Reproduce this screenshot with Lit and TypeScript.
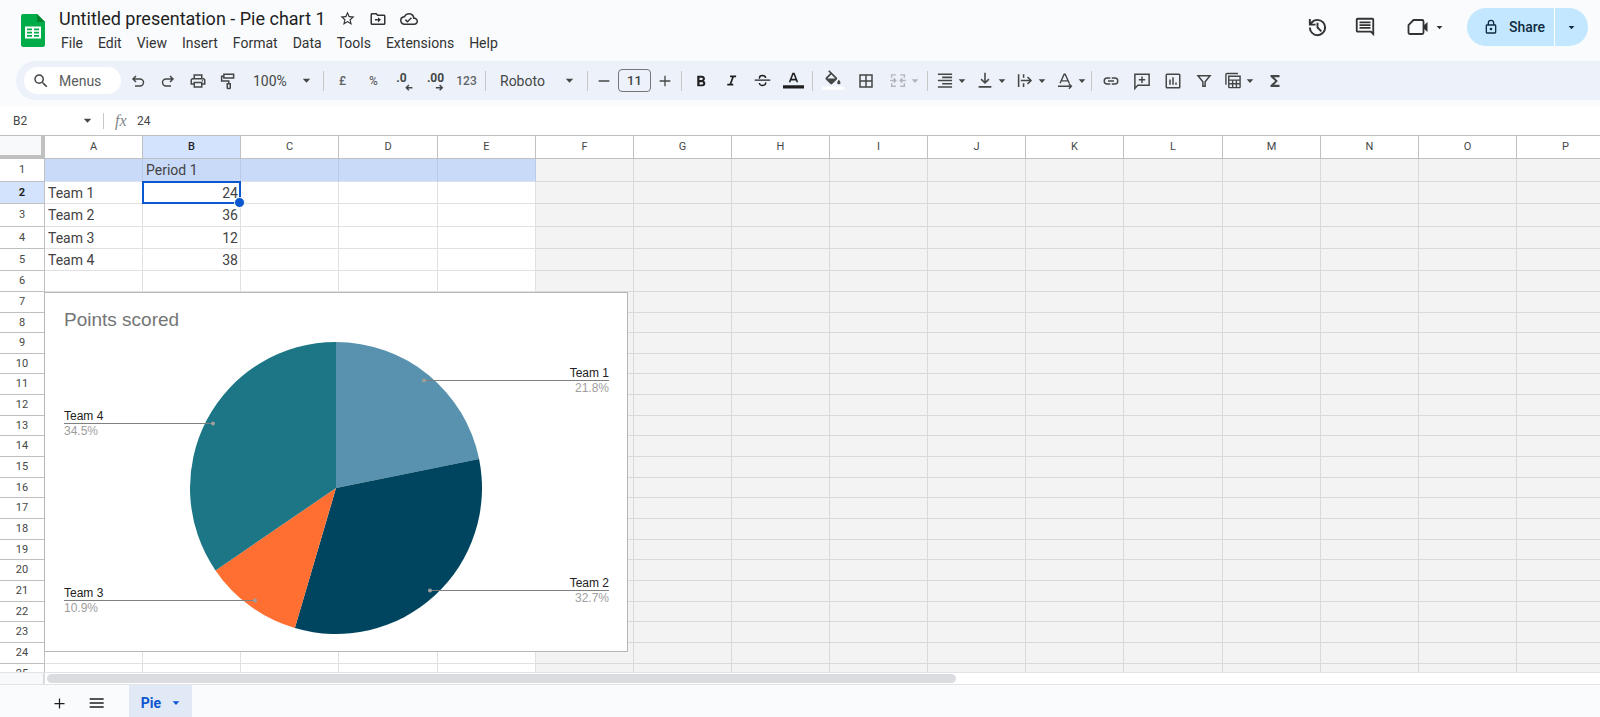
import { LitElement, html, css, svg, nothing } from "lit";
import { customElement, property } from "lit/decorators.js";
import { classMap } from "lit/directives/class-map.js";

const GLYPHS: Record<string, unknown> = {
  star: svg`<path d="m22 9.24-7.19-.62L12 2 9.19 8.63 2 9.24l5.46 4.73L5.82 21 12 17.27 18.18 21l-1.63-7.03zM12 15.4l-3.76 2.27 1-4.28-3.32-2.88 4.38-.38L12 6.1l1.71 4.04 4.38.38-3.32 2.88 1 4.28z"/>`,
  move: svg`<path d="M20 6h-8l-2-2H4c-1.1 0-2 .9-2 2v12c0 1.100.9 2 2 2h16c1.100 0 2-.9 2-2V8c0-1.100-.9-2-2-2m0 12H4V6h5.170l2 2H20zm-8-4v2.500l4-3.500-4-3.500V12H8v2z"/>`,
  cloud: svg`<path d="M19.35 10.04A7.49 7.49 0 0 0 12 4C9.110 4 6.600 5.640 5.350 8.040A5.994 5.994 0 0 0 0 14c0 3.310 2.690 6 6 6h13c2.760 0 5-2.240 5-5 0-2.640-2.050-4.780-4.650-4.960M19 18H6c-2.210 0-4-1.790-4-4s1.790-4 4-4h.710C7.370 7.690 9.480 6 12 6c3.040 0 5.500 2.460 5.500 5.500v.500H19c1.660 0 3 1.340 3 3s-1.340 3-3 3m-9-3.820-2.090-2.090L6.500 13.500 10 17l6.010-6.010-1.410-1.410z"/>`,
  history: svg`<path d="M12 3a9 9 0 0 0-7 3.360V3H3v7h7V8H6.260A7 7 0 1 1 5 12H3a9 9 0 1 0 9-9m-1 4v5.400l4.300 4.300 1.400-1.400-3.700-3.700V7z"/>`,
  comment: svg`<path d="M20 2H4c-1.100 0-2 .9-2 2v12c0 1.100.9 2 2 2h14l4 4V4c0-1.100-.9-2-2-2m0 15.200-1.200-1.200H4V4h16zM6 12h12v2H6zm0-3h12v2H6zm0-3h12v2H6z"/>`,
  video: svg`<path d="M7.500 5H16a1.500 1.500 0 0 1 1.500 1.500v11A1.500 1.500 0 0 1 16 19H4a1.500 1.500 0 0 1-1.500-1.500V10z" fill="none" stroke="currentColor" stroke-width="1.800"/><path d="m17 11 4.500-4v10L17 13z"/>`,
  lock: svg`<path d="M18 8h-1V6A5 5 0 0 0 7 6v2H6a2 2 0 0 0-2 2v10a2 2 0 0 0 2 2h12a2 2 0 0 0 2-2V10a2 2 0 0 0-2-2M9 6a3 3 0 0 1 6 0v2H9zm9 14H6V10h12zm-6-3a2 2 0 1 0 0-4 2 2 0 0 0 0 4"/>`,
  search: svg`<path d="M15.500 14h-.790l-.280-.270A6.471 6.471 0 0 0 16 9.500 6.500 6.500 0 1 0 9.500 16c1.610 0 3.090-.590 4.230-1.570l.270.280v.790l5 4.990L20.490 19zm-6 0C7.010 14 5 11.990 5 9.500S7.010 5 9.500 5 14 7.010 14 9.500 11.990 14 9.500 14"/>`,
  undo: svg`<path d="M9 4.500 4.500 9 9 13.500M5 9h10a5 5 0 0 1 0 10.500H7.500" fill="none" stroke="currentColor" stroke-width="2.200"/>`,
  redo: svg`<path d="M15 4.500 19.500 9 15 13.500M19 9H9a5 5 0 0 0 0 10.500h7.500" fill="none" stroke="currentColor" stroke-width="2.200"/>`,
  print: svg`<path d="M19 8h-1V3H6v5H5c-1.660 0-3 1.340-3 3v6h4v4h12v-4h4v-6c0-1.660-1.340-3-3-3M8 5h8v3H8zm8 14H8v-4h8zm2-4v-2H6v2H4v-4c0-.550.450-1 1-1h14c.550 0 1 .450 1 1v4z"/><circle cx="18" cy="11.500" r="1"/>`,
  paint: svg`<path d="M6.500 3h13v5h-13zM6.500 5.500H3.500v6.500H13v3M11 15.500h4V21a1 1 0 0 1-1 1h-2a1 1 0 0 1-1-1z" fill="none" stroke="currentColor" stroke-width="2"/>`,
  bold: svg`<path d="M15.600 11.790c.970-.670 1.650-1.770 1.650-2.790 0-2.260-1.750-4-4-4H7v14h7.040c2.090 0 3.710-1.700 3.710-3.790 0-1.520-.860-2.820-2.150-3.420M10 7.500h3a1.500 1.500 0 0 1 0 3h-3zm3.500 9H10v-3h3.500a1.500 1.500 0 0 1 0 3"/>`,
  italic: svg`<path d="M10 5v2.300h2.800L9.400 16.700H6V19h8.500v-2.300h-2.600l3.400-9.400H18.500V5z"/>`,
  strike: svg`<path d="M1 11.500h22M16.500 8.500C16.200 6.300 14.500 5 12 5 9.500 5 7.700 6.300 7.700 8.300c0 .5.1.9.3 1.200M7.500 15.500c.3 2.200 2 3.500 4.500 3.500s4.500-1.300 4.500-3.300c0-.5-.1-.9-.3-1.200" fill="none" stroke="currentColor" stroke-width="2"/>`,
  textColor: svg`<path d="M7.500 14 11.400 4h1.200l3.900 10M9 11h6" fill="none" stroke="currentColor" stroke-width="1.800"/><path d="M0 17.500h24v3.600H0z"/>`,
  fill: svg`<path d="M16.560 7.940 7.620-1 6.200.410l2.380 2.380-5.150 5.150a1.490 1.490 0 0 0 0 2.120l5.500 5.500c.290.290.680.440 1.060.440s.770-.150 1.060-.440l5.500-5.500c.590-.580.590-1.530.010-2.120M5.200 9 10 4.200 14.800 9zM19 10.500s-2 2.170-2 3.500a2 2 0 0 0 4 0c0-1.330-2-3.500-2-3.500"/><path d="M-1 18.500h26v4H-1z" fill="#fff"/>`,
  borders: svg`<path d="M3 3v18h18V3zm8 16H5v-6h6zm0-8H5V5h6zm8 8h-6v-6h6zm0-8h-6V5h6z"/>`,
  merge: svg`<path d="M9 4H3v4M3 16v4h6M15 4h6v4M21 16v4h-6M1 12h7M23 12h-7M6 9l3 3-3 3M18 9l-3 3 3 3" fill="none" stroke="currentColor" stroke-width="2"/>`,
  align: svg`<path d="M2 2h20v2.200H2zM8 6.500h14v2.200H8zM2 11h20v2.200H2zM8 15.500h14v2.200H8zM2 20h20v2.200H2z"/>`,
  valign: svg`<path d="M12 1v14M6.500 10l5.500 5.500 5.500-5.500M3 21h18" fill="none" stroke="currentColor" stroke-width="2.200"/>`,
  overflow: svg`<path d="M3 3v18M10 3v5M10 16v5M6 12h14M15.500 7l5 5-5 5" fill="none" stroke="currentColor" stroke-width="2.200"/>`,
  rotate: svg`<path d="M5 16 10.800 3h1.400L18 16M7 12.500h9M2 20h18M17.500 16.500l3.500 3.500-3.500 3.500" fill="none" stroke="currentColor" stroke-width="2"/>`,
  link: svg`<path d="M3.900 12A3.100 3.100 0 0 1 7 8.900h4V7H7a5 5 0 0 0 0 10h4v-1.900H7A3.100 3.100 0 0 1 3.900 12M8 13h8v-2H8zm9-6h-4v1.900h4a3.100 3.100 0 0 1 0 6.200h-4V17h4a5 5 0 0 0 0-10"/>`,
  addComment: svg`<path d="M2.500 22V3h19v14.500h-15zM12 6v8.500M7.700 10.200h8.600" fill="none" stroke="currentColor" stroke-width="2"/>`,
  chart: svg`<rect x="3" y="3" width="18" height="18" rx="1" fill="none" stroke="currentColor" stroke-width="2"/><path d="M7 10h2v7H7zM11 7h2v10h-2zM15 14h2v3h-2z"/>`,
  filter: svg`<path d="M4 5h16l-6.500 8v6h-3v-6z" fill="none" stroke="currentColor" stroke-width="2"/>`,
  views: svg`<path d="M2 18V3.500C2 2.500 2.500 2 3.500 2H19M6 6h16v15a1 1 0 0 1-1 1H7a1 1 0 0 1-1-1zM6 11.500h16M6 16.700h16M11.500 11.500V22M16.800 11.500V22" fill="none" stroke="currentColor" stroke-width="2"/>`,
  sum: svg`<path d="M18 4H6v2.300l6.200 5.700L6 17.700V20h12v-3h-7.200l5.100-5L10.800 7H18z"/>`,
  minus: svg`<path d="M4 11h16v2H4z"/>`,
  plus: svg`<path d="M20 13h-7v7h-2v-7H4v-2h7V4h2v7h7z"/>`,
  lines: svg`<path d="M1 5h21v2.200H1zM1 11h21v2.200H1zM1 17h21v2.200H1z"/>`,
  caret: svg`<path d="M2 7h20L12 18z"/>`,
  decLeft: svg`<path d="M23 20H12M17 15.500 12.500 20l4.500 4.500" fill="none" stroke="currentColor" stroke-width="2.500"/>`,
  decRight: svg`<path d="M10 20h11M16.500 15.500 21 20l-4.500 4.500" fill="none" stroke="currentColor" stroke-width="2.500"/>`,
};

const icon = (name: string, size = 18) =>
  html`<svg width=${size} height=${size} viewBox="0 0 24 24" fill="currentColor" overflow="visible" aria-hidden="true">${GLYPHS[name]}</svg>`;

const baseStyles = css`
  :host, * { box-sizing: border-box; }
  button, input, select {
    font: inherit; color: inherit; background: none; border: 0;
    margin: 0; padding: 0; outline: 0; min-width: 0; appearance: none;
  }
  button { cursor: pointer; display: flex; align-items: center; justify-content: center; }
  svg { display: block; flex: none; }
`;

@customElement("doc-header")
class DocHeader extends LitElement {
  static styles = [baseStyles, css`
    :host { display: flex; justify-content: space-between; height: 61px; padding: 8px 12px 0 20px; color: #1f1f1f; }
    .left { display: flex; gap: 13px; }
    .logo { margin-top: 5px; }
    .title-row { display: flex; align-items: center; height: 21px; gap: 13px; }
    h1 { margin: 0; font-size: 18px; font-weight: 400; line-height: 20px; white-space: nowrap; }
    .title-row button { color: #333; }
    nav { display: flex; gap: 15px; margin-top: 4px; padding-left: 2px; font-size: 14px; line-height: 20px; color: #333; }
    .right { display: flex; align-items: flex-start; }
    .tool { height: 38px; width: 48px; color: #333; }
    .meet { width: 71px; gap: 6px; }
    .share { display: flex; margin-left: 7px; background: #c2e7ff; border-radius: 19px; height: 38px; font-size: 14px; font-weight: 500; color: #0f2c42; }
    .share .main { width: 87px; gap: 10px; padding-left: 7px; }
    .share .more { width: 34px; border-left: 1px solid #fff; }
  `];
  render() {
    return html`
      <div class="left">
        <svg class="logo" width="26" height="34" viewBox="0 0 26 34" aria-hidden="true">
          <path d="M3 1h14l8 8v22.500a2.500 2.500 0 0 1-2.500 2.500h-19A2.500 2.500 0 0 1 1 31.500V3a2 2 0 0 1 2-2" fill="#00ac47"/>
          <path d="M17 1l8 8h-8z" fill="#00832d"/>
          <path d="M5 13.500h16v12H5zM7 15.500v1.800h5v-1.800zm7 0v1.800h5v-1.800zm-7 3.200v1.800h5v-1.800zm7 0v1.800h5v-1.800zm-7 3.200v1.800h5v-1.800zm7 0v1.800h5v-1.800z" fill="#fff" fill-rule="evenodd"/>
        </svg>
        <div>
          <div class="title-row">
            <h1>Untitled presentation - Pie chart 1</h1>
            <button aria-label="Star">${icon("star", 17)}</button>
            <button aria-label="Move">${icon("move", 18)}</button>
            <button aria-label="Saved to Drive">${icon("cloud", 18)}</button>
          </div>
          <nav>${["File", "Edit", "View", "Insert", "Format", "Data", "Tools", "Extensions", "Help"].map((m) => html`<button>${m}</button>`)}</nav>
        </div>
      </div>
      <div class="right">
        <button class="tool" aria-label="Version history">${icon("history", 23)}</button>
        <button class="tool" aria-label="Comments">${icon("comment", 22)}</button>
        <button class="tool meet" aria-label="Join a call">${icon("video", 24)}${icon("caret", 7)}</button>
        <div class="share">
          <button class="main">${icon("lock", 16)}Share</button>
          <button class="more" aria-label="Share options">${icon("caret", 7)}</button>
        </div>
      </div>`;
  }
}

@customElement("tool-bar")
class ToolBar extends LitElement {
  static styles = [baseStyles, css`
    :host { display: flex; align-items: center; height: 39px; margin: 0 0 7px 16px; padding-left: 8px; background: #edf2fa; border-radius: 20px 0 0 20px; color: #444746; font-size: 14px; overflow: hidden; }
    .search { display: flex; align-items: center; gap: 9px; width: 97px; height: 27px; margin-right: 2px; padding-left: 8px; border-radius: 14px; background: #fff; }
    .search input { width: 52px; }
    .search input::placeholder { color: #5a5d5c; opacity: 1; }
    .group { display: flex; align-items: center; }
    .group button { width: 31px; height: 28px; }
    .edit button { width: 30px; }
    .step button { width: 26px; }
    .fills button { width: 33px; }
    .drops { gap: 3px; }
    .group .drop { width: 37px; gap: 3px; padding: 0 1px 0 3px; }
    .group .drop svg:first-child { width: 20px; }
    .group .merge { width: 42px; padding: 0 4px 0 5px; color: #b3b6b9; }
    .divider { flex: none; width: 1px; height: 20px; margin: 0 3px; background: #c7c7c7; }
    .pick { display: grid; align-items: center; }
    .pick > * { grid-area: 1 / 1; }
    .pick svg { justify-self: end; pointer-events: none; }
    .zoom { width: 77px; padding-right: 9px; }
    .zoom select { width: 68px; padding-left: 10px; }
    .font { width: 95px; padding-right: 10px; }
    .font select { width: 80px; padding-left: 11px; }
    .size { width: 33px; height: 23px; margin: 0 1px; border: 1px solid #747775; border-radius: 4px; text-align: center; font-weight: 500; font-size: 13px; }
    .sign { font-size: 12px; font-weight: 500; color: #5f6368; }
    .decimal { display: grid; justify-content: center; align-content: center; }
    .decimal > * { grid-area: 1 / 1; }
    .decimal span { font-size: 12px; font-weight: 700; line-height: 12px; padding-bottom: 6px; }
    .decimal svg { justify-self: end; align-self: end; }
    .decimal .left { padding-right: 6px; }
    .ink { color: #1f1f1f; }
  `];
  private button(name: string, label: string, size = 18) {
    return html`<button aria-label=${label}>${icon(name, size)}</button>`;
  }
  private drop(name: string, label: string, cls = "") {
    return html`<button class="drop ${cls}" aria-label=${label}>${icon(name, 17)}${icon("caret", 8)}</button>`;
  }
  render() {
    const rule = html`<span class="divider"></span>`;
    return html`
      <label class="search">${icon("search", 18)}<input type="text" placeholder="Menus" aria-label="Menus"></label>
      <div class="group edit">
        ${this.button("undo", "Undo", 16)}${this.button("redo", "Redo", 16)}${this.button("print", "Print")}${this.button("paint", "Paint format")}
      </div>
      <div class="pick zoom"><select aria-label="Zoom"><option>100%</option></select>${icon("caret", 9)}</div>
      ${rule}
      <div class="group">
        <button class="sign">£</button><button class="sign">%</button>
        <button class="decimal" aria-label="Decrease decimal places"><span class="left">.0</span>${icon("decLeft", 14)}</button>
        <button class="decimal" aria-label="Increase decimal places"><span>.00</span>${icon("decRight", 14)}</button>
        <button class="sign">123</button>
      </div>
      ${rule}
      <div class="pick font"><select aria-label="Font"><option>Roboto</option></select>${icon("caret", 9)}</div>
      ${rule}
      <div class="group step">
        ${this.button("minus", "Decrease font size", 16)}
        <input class="size" type="text" aria-label="Font size" .value=${"11"}>
        ${this.button("plus", "Increase font size", 16)}
      </div>
      ${rule}
      <div class="group ink">
        ${this.button("bold", "Bold")}${this.button("italic", "Italic", 17)}${this.button("strike", "Strikethrough", 17)}${this.button("textColor", "Text colour", 21)}
      </div>
      ${rule}
      <div class="group fills">
        ${this.button("fill", "Fill colour", 20)}${this.button("borders", "Borders")}${this.drop("merge", "Merge cells", "merge")}
      </div>
      ${rule}
      <div class="group drops">
        ${this.drop("align", "Horizontal align")}${this.drop("valign", "Vertical align")}${this.drop("overflow", "Text wrapping")}${this.drop("rotate", "Text rotation")}
      </div>
      ${rule}
      <div class="group">
        ${this.button("link", "Insert link")}${this.button("addComment", "Insert comment")}${this.button("chart", "Insert chart")}${this.button("filter", "Create a filter")}
        <div class="group drops">${this.drop("views", "Filter views")}${this.button("sum", "Functions")}</div>
      </div>`;
  }
}

@customElement("formula-bar")
class FormulaBar extends LitElement {
  static styles = [baseStyles, css`
    :host { display: flex; align-items: center; height: 29px; padding: 0 0 1px 13px; background: #fff; border-bottom: 1px solid #c0c0c0; font-size: 12px; color: #444746; }
    .name { width: 70px; }
    .divider { width: 1px; height: 16px; margin: 0 11px; background: #c7c7c7; }
    .fx { width: 22px; font: italic 16px "Liberation Serif", serif; color: #80868b; }
    .value { flex: 1; }
  `];
  render() {
    return html`
      <input class="name" type="text" aria-label="Name box" .value=${"B2"}>
      <button aria-label="Named ranges">${icon("caret", 9)}</button>
      <span class="divider"></span>
      <span class="fx">fx</span>
      <input class="value" type="text" aria-label="Formula" .value=${"24"}>`;
  }
}

interface Slice { name: string; value: number; color: string; dot: [number, number]; side: "left" | "right"; }

const SLICES: Slice[] = [
  { name: "Team 1", value: 24, color: "#5892ae", dot: [379, 87], side: "right" },
  { name: "Team 2", value: 36, color: "#00455f", dot: [385, 297], side: "right" },
  { name: "Team 3", value: 12, color: "#ff6f31", dot: [210, 307], side: "left" },
  { name: "Team 4", value: 38, color: "#1c7685", dot: [168, 130], side: "left" },
];

@customElement("pie-chart")
class PieChart extends LitElement {
  @property({ attribute: false }) slices: Slice[] = SLICES;
  static styles = css`
    :host { display: block; box-sizing: border-box; background: #fff; border: 1px solid #b7b7b7; }
    svg { display: block; font-family: "Liberation Sans", Arial, sans-serif; }
    .heading { font-size: 19px; fill: #757575; }
    .label { font-size: 12px; fill: #222; }
    .share { font-size: 12px; fill: #9e9e9e; }
    .leader { stroke: #808080; stroke-width: 1; }
    .dot { fill: #9e9e9e; }
    .end { text-anchor: end; }
  `;
  render() {
    const cx = 291, cy = 195, r = 146;
    const total = this.slices.reduce((sum, s) => sum + s.value, 0);
    const at = (f: number) => `${cx + r * Math.sin(f * 2 * Math.PI)} ${cy - r * Math.cos(f * 2 * Math.PI)}`;
    let from = 0;
    const wedges = this.slices.map((s) => {
      const to = from + s.value / total;
      const wedge = svg`<path d="M${cx} ${cy}L${at(from)}A${r} ${r} 0 0 1 ${at(to)}Z" fill=${s.color} />`;
      from = to;
      return wedge;
    });
    return html`
      <svg width="582" height="358" viewBox="0 0 582 358" role="img" aria-label="Points scored">
        <text class="heading" x="19" y="33">Points scored</text>
        ${wedges}
        ${this.slices.map((s) => {
          const [x, y] = s.dot;
          const edge = s.side === "left" ? 19 : 564;
          const end = s.side === "right" ? "end" : "";
          return svg`
            <path class="leader" d="M${edge} ${y + 0.5}H${x}" />
            <circle class="dot" cx=${x} cy=${y + 0.5} r="2" />
            <text class="label ${end}" x=${edge} y=${y - 3}>${s.name}</text>
            <text class="share ${end}" x=${edge} y=${y + 12}>${((s.value / total) * 100).toFixed(1)}%</text>`;
        })}
      </svg>`;
  }
}

const COLUMNS = "ABCDEFGHIJKLMNOP".split("").map((name) => ({ name, width: "DL".includes(name) ? 99 : 98 }));
const ROW_HEIGHTS = [23, 22, 23, 22, 22, 21, 21, 20, 21, 20, 21, 21, 20, 21, 21, 20, 21, 21, 20, 21, 21, 20, 21, 21, 21];
const CELLS: Record<string, string> = {
  B1: "Period 1", A2: "Team 1", B2: "24", A3: "Team 2", B3: "36", A4: "Team 3", B4: "12", A5: "Team 4", B5: "38",
};

@customElement("sheet-grid")
class SheetGrid extends LitElement {
  static styles = css`
    * { box-sizing: border-box; }
    :host { display: block; position: relative; overflow: hidden; background: #f3f3f3; }
    table { border-collapse: separate; border-spacing: 0; table-layout: fixed; width: max-content; }
    th { padding: 0; background: #fff; border: solid #c0c0c0; border-width: 0 1px 1px 0; font-size: 11px; font-weight: 400; line-height: 14px; color: #444746; }
    thead tr { height: 23px; }
    .corner { background: #f8f9fa; border-width: 0 4px 4px 0; }
    .active { background: #d3e3fd; color: #1f1f1f; font-weight: 500; }
    tbody .active { font-weight: 700; }
    td { padding: 0 2px 0 3px; border: solid #d9d9d9; border-width: 0 1px 1px 0; font-size: 14px; line-height: 18px; color: #434343; white-space: nowrap; }
    .used { background: #fff; border-color: #e1e1e1; }
    .banner { background: #c9daf8; border-color: #b9c9e6; border-bottom-color: #dde3ee; }
    .number { text-align: right; }
    .selected { position: relative; }
    .selected::before { content: ""; position: absolute; inset: -1px; border: 2px solid #0b57d0; }
    .selected::after { content: ""; position: absolute; right: -5px; bottom: -5px; width: 9px; height: 9px; border: 1px solid #fff; border-radius: 50%; background: #0b57d0; }
    pie-chart { position: absolute; left: 44px; top: 156px; width: 584px; }
  `;
  render() {
    return html`
      <table>
        <colgroup><col style="width:45px">${COLUMNS.map((c) => html`<col style="width:${c.width}px">`)}</colgroup>
        <thead><tr><th class="corner"></th>${COLUMNS.map((c) => html`<th class=${c.name === "B" ? "active" : ""}>${c.name}</th>`)}</tr></thead>
        <tbody>
          ${ROW_HEIGHTS.map((height, i) => html`
            <tr style="height:${height}px">
              <th class=${i === 1 ? "active" : ""}>${i + 1}</th>
              ${COLUMNS.map((c, x) => {
                const value = CELLS[c.name + (i + 1)];
                return html`<td class=${classMap({
                  used: x < 5, banner: x < 5 && i === 0, number: !!value && !isNaN(Number(value)), selected: c.name === "B" && i === 1,
                })}>${value ?? nothing}</td>`;
              })}
            </tr>`)}
        </tbody>
      </table>
      <pie-chart></pie-chart>`;
  }
}

@customElement("sheet-tabs")
class SheetTabs extends LitElement {
  static styles = [baseStyles, css`
    :host { display: block; background: #f9fbfd; color: #1f1f1f; }
    .scroll { display: flex; height: 13px; background: #fff; border: solid #e1e3e6; border-width: 1px 0; }
    .stub { width: 45px; margin-right: 2px; background: #f8f9fa; border-right: 2px solid #dadce0; }
    .track { flex: 1; }
    .thumb { width: 58.5%; height: 9px; margin-top: 1px; border-radius: 5px; background: #dadce0; }
    .tabs { display: flex; align-items: center; height: 32px; padding-left: 40px; }
    .tabs button { width: 38px; height: 32px; padding-top: 4px; }
    .tabs .tab { width: 63px; margin-left: 13px; gap: 11px; background: #e1e9f7; color: #0b57d0; font-size: 14px; font-weight: 700; }
  `];
  render() {
    return html`
      <div class="scroll"><div class="stub"></div><div class="track"><div class="thumb"></div></div></div>
      <div class="tabs">
        <button aria-label="Add sheet">${icon("plus", 15)}</button>
        <button aria-label="All sheets">${icon("lines", 16)}</button>
        <button class="tab">Pie${icon("caret", 8)}</button>
      </div>`;
  }
}

@customElement("app-root")
class AppRoot extends LitElement {
  static styles = css`
    :host { display: flex; flex-direction: column; height: 100vh; overflow: hidden; background: #f9fbfd; font-family: Roboto, "Liberation Sans", sans-serif; }
    doc-header, tool-bar, formula-bar, sheet-tabs { flex: none; }
    sheet-grid { flex: 1; min-height: 0; }
  `;
  render() {
    return html`
      <doc-header></doc-header>
      <tool-bar></tool-bar>
      <formula-bar></formula-bar>
      <sheet-grid></sheet-grid>
      <sheet-tabs></sheet-tabs>`;
  }
}
